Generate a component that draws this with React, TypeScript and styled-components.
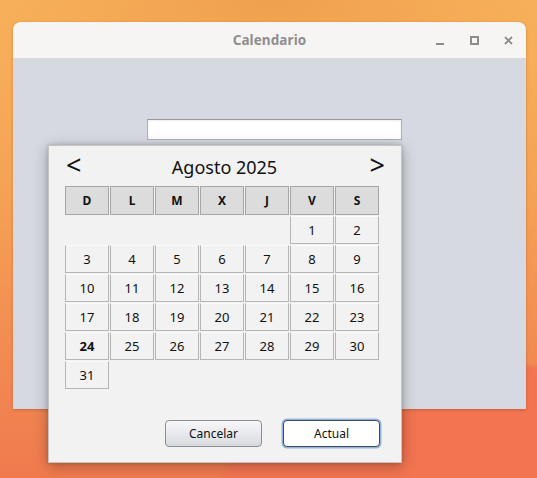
import React from "react";
import styled, { createGlobalStyle } from "styled-components";

const Global = createGlobalStyle`
  html, body { margin: 0; padding: 0; }
  body { font-family: "Noto Sans", "DejaVu Sans", sans-serif; }
  * { box-sizing: border-box; }
`;

const Desktop = styled.div`
  position: relative;
  width: 537px;
  height: 478px;
  overflow: hidden;
  background:
    radial-gradient(ellipse 420px 260px at 470px 520px, #f27450 0%, #f27450 60%, rgba(242,116,80,0) 62%),
    radial-gradient(ellipse 300px 120px at 270px 0px, #f0a04f 0%, rgba(240,160,79,0) 100%),
    linear-gradient(180deg, #f8b25b 0%, #f5a255 40%, #f28a52 75%, #f07a4e 100%);
`;

const MainWindow = styled.div`
  position: absolute;
  left: 13px;
  top: 22px;
  width: 513px;
  height: 387px;
  border-radius: 8px 8px 0 0;
  overflow: hidden;
  display: flex;
  flex-direction: column;
  box-shadow: 0 1px 3px rgba(120, 60, 20, 0.35);
`;

const TitleBar = styled.div`
  position: relative;
  height: 37px;
  flex: none;
  background: #f6f5f4;
  border-bottom: 1px solid #d9d5d1;
  display: flex;
  align-items: center;
  justify-content: center;
`;

const Title = styled.span`
  font-family: "Noto Sans", sans-serif;
  font-weight: 700;
  font-size: 13.5px;
  color: #8e8e8e;
  letter-spacing: 0.1px;
`;

const Controls = styled.div`
  position: absolute;
  right: 13px;
  top: 14px;
  display: flex;
  gap: 25px;
  align-items: flex-start;
`;

const Ctrl = styled.svg`
  width: 9px;
  height: 9px;
  display: block;
`;

const Content = styled.div`
  flex: 1;
  background: #d6d9e1;
  padding: 60px 0 0 134px;
`;

const TextField = styled.div`
  width: 255px;
  height: 21px;
  background: #ffffff;
  border: 1px solid #aeb0b3;
  border-top-color: #969899;
  box-shadow: inset 0 1px 2px rgba(0, 0, 0, 0.08);
`;

const Dialog = styled.div`
  position: absolute;
  left: 48px;
  top: 145px;
  width: 354px;
  height: 318px;
  background: #f2f2f2;
  border: 1px solid #c4c4c4;
  box-shadow: 0 3px 14px rgba(0, 0, 0, 0.28), 0 0 4px rgba(0, 0, 0, 0.18);
  display: flex;
  flex-direction: column;
  padding: 4px 0 15px 16px;
`;

const Header = styled.div`
  height: 32px;
  width: 320px;
  display: flex;
  align-items: center;
  justify-content: space-between;
  padding: 0 0 0 1px;
`;

const Arrow = styled.span`
  font-family: "Noto Sans", sans-serif;
  font-size: 27px;
  line-height: 1;
  color: #111;
  margin-top: -3px;
`;

const MonthLabel = styled.span`
  font-family: "Noto Sans", sans-serif;
  font-size: 18px;
  color: #111;
  margin-left: -2px;
  margin-top: 1px;
`;

const Grid = styled.div`
  margin-top: 4px;
  display: grid;
  grid-template-columns: repeat(7, 44px);
  grid-template-rows: 29px repeat(6, 28px);
  gap: 1px;
`;

const HeadCell = styled.div`
  background: #dcdcdc;
  border: 1px solid #a6a6a6;
  display: flex;
  align-items: center;
  justify-content: center;
  font-family: "Noto Sans", sans-serif;
  font-weight: 700;
  font-size: 12px;
  color: #111;
`;

const DayCell = styled.div<{ $empty?: boolean; $today?: boolean }>`
  border: 1px solid ${(p) => (p.$empty ? "transparent" : "#b6b6b6")};
  border-top-color: ${(p) => (p.$empty ? "transparent" : "#fbfbfb")};
  background: #f2f2f2;
  display: flex;
  align-items: center;
  justify-content: center;
  font-family: "Noto Sans", sans-serif;
  font-size: 13px;
  font-weight: ${(p) => (p.$today ? 700 : 400)};
  color: #111;
`;

const ButtonRow = styled.div`
  margin-top: auto;
  width: 315px;
  display: flex;
  justify-content: flex-end;
  gap: 21px;
`;

const Button = styled.button<{ $focused?: boolean }>`
  width: 97px;
  height: 27px;
  border-radius: 4px;
  font-family: "Noto Sans", sans-serif;
  font-size: 12px;
  color: #111;
  padding: 0;
  border: 1px solid ${(p) => (p.$focused ? "#3e4a57" : "#8a8d91")};
  background: ${(p) =>
    p.$focused ? "#ffffff" : "linear-gradient(180deg, #f7f7f9 0%, #e6e8ec 55%, #d6d9df 100%)"};
  box-shadow: ${(p) => (p.$focused ? "0 0 0 1.5px #93b5dd" : "none")};
`;

const heads = ["D", "L", "M", "X", "J", "V", "S"];

export default function App() {
  const cells: { n?: number }[] = [];
  for (let i = 0; i < 5; i++) cells.push({});
  for (let d = 1; d <= 31; d++) cells.push({ n: d });
  while (cells.length < 42) cells.push({});

  return (
    <>
      <Global />
      <Desktop>
        <MainWindow>
          <TitleBar>
            <Title>Calendario</Title>
            <Controls>
              <Ctrl viewBox="0 0 9 9">
                <rect x="0" y="7" width="8" height="2" fill="#8c8c8c" />
              </Ctrl>
              <Ctrl viewBox="0 0 9 9">
                <rect x="1" y="1" width="7" height="7" fill="none" stroke="#8c8c8c" strokeWidth="2" />
              </Ctrl>
              <Ctrl viewBox="0 0 9 9">
                <path d="M1 1 L8 8 M8 1 L1 8" stroke="#8c8c8c" strokeWidth="1.8" />
              </Ctrl>
            </Controls>
          </TitleBar>
          <Content>
            <TextField />
          </Content>
        </MainWindow>
        <Dialog>
          <Header>
            <Arrow>&lt;</Arrow>
            <MonthLabel>Agosto 2025</MonthLabel>
            <Arrow>&gt;</Arrow>
          </Header>
          <Grid>
            {heads.map((h) => (
              <HeadCell key={h}>{h}</HeadCell>
            ))}
            {cells.map((c, i) => (
              <DayCell key={i} $empty={c.n === undefined} $today={c.n === 24}>
                {c.n ?? ""}
              </DayCell>
            ))}
          </Grid>
          <ButtonRow>
            <Button>Cancelar</Button>
            <Button $focused>Actual</Button>
          </ButtonRow>
        </Dialog>
      </Desktop>
    </>
  );
}
